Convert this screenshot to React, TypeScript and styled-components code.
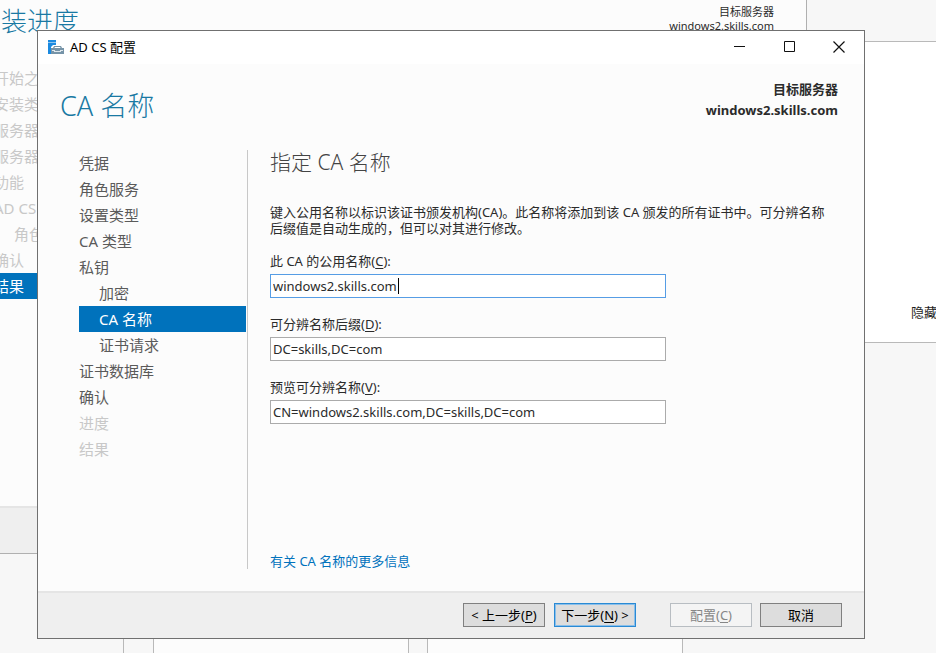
import React, { ReactNode } from "react";
import styled, { createGlobalStyle, css } from "styled-components";

const GlobalStyle = createGlobalStyle`
  *, *::before, *::after { box-sizing: border-box; }
  html, body, #root { height: 100%; }
  body {
    margin: 0;
    overflow: hidden;
    color: #2b2b2b;
    font: 13px/16px "Noto Sans", "Noto Sans CJK SC", sans-serif;
  }
  h1, h2, p, ul { margin: 0; padding: 0; }
  ul { list-style: none; }
  button, input { font: inherit; }
`;

const Desktop = styled.div`
  position: relative;
  height: 100%;
  min-height: 653px;
  overflow: hidden;
  background: #f7f7f7;
`;

const TileRow = styled.div`
  position: absolute;
  inset: 540px 0 -40px -132px;
  display: flex;
`;

const Tile = styled.div<{ $plain?: boolean }>`
  flex: 0 0 256px;
  margin-right: ${(p) => (p.$plain ? 29 : 18)}px;
  border: 1px solid #b9b9b9;
  background: ${(p) => (p.$plain ? "#f7f7f7" : "#fcfcfc")};
`;

const NoticePanel = styled.aside`
  position: absolute;
  inset: 41px -40px auto 780px;
  height: 302px;
  display: flex;
  align-items: flex-end;
  padding: 0 0 21px 130px;
  border: 1px solid #b9b9b9;
  background: #fff;
`;

const HideButton = styled.button`
  padding: 0;
  border: 0;
  background: none;
  color: #1e1e1e;
  line-height: 18px;
`;

const Window = styled.section<{ $rear?: boolean }>`
  position: absolute;
  inset: ${(p) => (p.$rear ? "-55px 129px auto -48px" : "30px 71px auto 37px")};
  height: 609px;
  display: flex;
  flex-direction: column;
  border: 1px solid ${(p) => (p.$rear ? "#b0b0b0" : "#707070")};
  background: #fcfcfc;
`;

const TitleBar = styled.header`
  flex: none;
  display: flex;
  align-items: center;
  height: 33px;
  padding: 0 0 2px 10px;
  background: #fff;
  color: #000;
`;

const TitleText = styled.span`
  flex: 1;
  margin-left: 6px;
`;

const CaptionButton = styled.button`
  display: grid;
  place-items: center;
  width: 50px;
  height: 31px;
  padding: 0;
  border: 0;
  background: none;
  color: #111;
`;

const Head = styled.div<{ $rear?: boolean }>`
  flex: none;
  display: flex;
  justify-content: space-between;
  height: 86px;
  padding: ${(p) => (p.$rear ? "26px 32px 0 22px" : "15px 26px 0 22px")};
`;

const PageTitle = styled.h1<{ $rear?: boolean }>`
  margin-top: ${(p) => (p.$rear ? -1 : 10)}px;
  color: #1979a3;
  font-size: ${(p) => (p.$rear ? 26 : 27)}px;
  font-weight: 300;
  line-height: 34px;
`;

const Target = styled.div<{ $rear?: boolean }>`
  text-align: right;
  font-size: ${(p) => (p.$rear ? 11 : 13)}px;
  font-weight: ${(p) => (p.$rear ? 400 : 700)};
  line-height: ${(p) => (p.$rear ? 14 : 21)}px;
`;

const Body = styled.div`
  flex: 1;
  display: flex;
  min-height: 0;
  padding: 0 32px 22px 41px;
`;

const Steps = styled.nav`
  flex: 0 0 169px;
  padding-right: 1px;
  border-right: 1px solid #c8c8c8;
`;

type StepState = "open" | "current" | "locked";

const stepColors = {
  open: css`color: #5a5a5a;`,
  current: css`
    background: #0072bc;
    color: #fff;
  `,
  locked: css`color: #c8c8c8;`,
};

const Step = styled.li<{ $state: StepState; $nested?: boolean }>`
  height: 26px;
  padding-left: ${(p) => (p.$nested ? 20 : 0)}px;
  font-size: 15px;
  line-height: 26px;
  white-space: nowrap;
  ${(p) => stepColors[p.$state]}
`;

const Content = styled.main`
  flex: 1;
  display: flex;
  flex-direction: column;
  align-items: flex-start;
  padding-left: 22px;
`;

const SectionTitle = styled.h2`
  color: #444;
  font-size: 21px;
  font-weight: 300;
  line-height: 24px;
`;

const Intro = styled.p`
  margin: 30px 0 16px;
`;

const Field = styled.div`
  display: flex;
  flex-direction: column;
  gap: 4px;
  width: 396px;
  max-width: 100%;
  margin-bottom: 17px;
`;

const FieldLabel = styled.label`
  line-height: 18px;
`;

const TextBoxFrame = styled.div`
  position: relative;
  display: flex;
`;

const TextBox = styled.input<{ $active?: boolean }>`
  width: 100%;
  height: 24px;
  padding: 0 2px;
  border: 1px solid ${(p) => (p.$active ? "#569de5" : "#ababab")};
  background: #fff;
  color: #2b2b2b;
  caret-color: transparent;
  outline: none;
`;

const Caret = styled.span`
  position: absolute;
  top: 4px;
  left: 128px;
  width: 1px;
  height: 16px;
  background: #000;
`;

const MoreLink = styled.a`
  margin: auto 0 0;
  color: #0072bc;
  line-height: 16px;
  text-decoration: none;
`;

const Footer = styled.footer`
  flex: none;
  display: flex;
  justify-content: flex-end;
  gap: 8px;
  height: 47px;
  padding: 10px 22px 0;
  border-top: 2px solid #e5e5e5;
  background: #efefef;
`;

const ButtonPair = styled.div`
  display: flex;
  gap: 9px;
  margin-right: 26px;
`;

const ActionButton = styled.button<{ $primary?: boolean }>`
  width: 82px;
  height: 24px;
  padding: 0;
  border: 1px solid ${(p) => (p.$primary ? "#2a8ad4" : "#808080")};
  box-shadow: inset 0 0 0 1px ${(p) => (p.$primary ? "#8abfea" : "transparent")};
  background: #ddd;
  color: #000;
  white-space: nowrap;
  &:disabled {
    border-color: #b8bdc2;
    background: #f4f4f4;
    color: #868686;
  }
`;

const Key = styled.u`
  text-underline-offset: 2px;
`;

interface StepInfo {
  name: string;
  state?: StepState;
  nested?: boolean;
}

interface WizardProps {
  name: string;
  title: string;
  steps: StepInfo[];
  rear?: boolean;
  actions?: ReactNode;
  children?: ReactNode;
}

const ServerIcon = () => (
  <svg width="16" height="16" viewBox="0 0 16 16" aria-hidden="true">
    <path fill="#1b8ae0" d="M0 1h8v2H0zM0 4h8v2H5L3 8v7H0z" />
    <path fill="#8cc4ef" d="M0 3h8v1H0z" />
    <path fill="#7694a8" d="M6 7h7l1 2h2v6H3V9h2z" />
    <path fill="#fff" d="M7 8h5l.6 1H6.400z" />
    <path fill="#dfe7ec" d="M4 11h3v1h5v-1h3v1h-2v1H6v-1H4z" />
  </svg>
);

const WindowCaption = ({ name }: { name: string }) => (
  <TitleBar>
    <ServerIcon />
    <TitleText>{name}</TitleText>
    <CaptionButton aria-label="最小化">
      <svg width="11" height="11"><path d="M0 5.500h11" stroke="currentColor" /></svg>
    </CaptionButton>
    <CaptionButton aria-label="最大化">
      <svg width="11" height="11"><path d="M.5.5h10v10H.5z" fill="none" stroke="currentColor" /></svg>
    </CaptionButton>
    <CaptionButton aria-label="关闭">
      <svg width="12" height="12"><path d="m.5.5 11 11m0-11-11 11" stroke="currentColor" strokeWidth="1.200" /></svg>
    </CaptionButton>
  </TitleBar>
);

const Wizard = ({ name, title, steps, rear, actions, children }: WizardProps) => (
  <Window $rear={rear} aria-label={name}>
    {rear ? <TitleBar /> : <WindowCaption name={name} />}
    <Head $rear={rear}>
      <PageTitle $rear={rear}>{title}</PageTitle>
      <Target $rear={rear}>
        <div>目标服务器</div>
        <div>windows2.skills.com</div>
      </Target>
    </Head>
    <Body>
      <Steps>
        <ul>
          {steps.map(({ name: label, state = "open", nested }) => (
            <Step key={label} $state={state} $nested={nested} aria-current={state === "current" ? "step" : undefined}>
              {label}
            </Step>
          ))}
        </ul>
      </Steps>
      <Content>{children}</Content>
    </Body>
    <Footer>{actions}</Footer>
  </Window>
);

interface FormFieldProps {
  id: string;
  label: string;
  accessKey: string;
  value: string;
  active?: boolean;
}

const FormField = ({ id, label, accessKey, value, active }: FormFieldProps) => (
  <Field>
    <FieldLabel htmlFor={id}>
      {label}(<Key>{accessKey}</Key>):
    </FieldLabel>
    <TextBoxFrame>
      <TextBox id={id} defaultValue={value} $active={active} spellCheck={false} />
      {active && <Caret />}
    </TextBoxFrame>
  </Field>
);

const installSteps: StepInfo[] = [
  { name: "开始之前", state: "locked" },
  { name: "安装类型", state: "locked" },
  { name: "服务器选择", state: "locked" },
  { name: "服务器角色", state: "locked" },
  { name: "功能", state: "locked" },
  { name: "AD CS", state: "locked" },
  { name: "角色服务", state: "locked", nested: true },
  { name: "确认", state: "locked" },
  { name: "结果", state: "current" },
];

const configSteps: StepInfo[] = [
  { name: "凭据" },
  { name: "角色服务" },
  { name: "设置类型" },
  { name: "CA 类型" },
  { name: "私钥" },
  { name: "加密", nested: true },
  { name: "CA 名称", state: "current", nested: true },
  { name: "证书请求", nested: true },
  { name: "证书数据库" },
  { name: "确认" },
  { name: "进度", state: "locked" },
  { name: "结果", state: "locked" },
];

export default function App() {
  return (
    <>
      <GlobalStyle />
      <Desktop>
        <TileRow>
          <Tile $plain />
          <Tile />
          <Tile />
        </TileRow>
        <NoticePanel>
          <HideButton>隐藏</HideButton>
        </NoticePanel>
        <Wizard rear name="添加角色和功能向导" title="安装进度" steps={installSteps} />
        <Wizard
          name="AD CS 配置"
          title="CA 名称"
          steps={configSteps}
          actions={
            <>
              <ButtonPair>
                <ActionButton>&lt; 上一步(<Key>P</Key>)</ActionButton>
                <ActionButton $primary>下一步(<Key>N</Key>) &gt;</ActionButton>
              </ButtonPair>
              <ActionButton disabled>配置(<Key>C</Key>)</ActionButton>
              <ActionButton>取消</ActionButton>
            </>
          }
        >
          <SectionTitle>指定 CA 名称</SectionTitle>
          <Intro>
            键入公用名称以标识该证书颁发机构(CA)。此名称将添加到该 CA 颁发的所有证书中。可分辨名称后缀值是自动生成的，但可以对其进行修改。
          </Intro>
          <FormField id="common-name" label="此 CA 的公用名称" accessKey="C" value="windows2.skills.com" active />
          <FormField id="suffix" label="可分辨名称后缀" accessKey="D" value="DC=skills,DC=com" />
          <FormField id="preview" label="预览可分辨名称" accessKey="V" value="CN=windows2.skills.com,DC=skills,DC=com" />
          <MoreLink href="#more">有关 CA 名称的更多信息</MoreLink>
        </Wizard>
      </Desktop>
    </>
  );
}
